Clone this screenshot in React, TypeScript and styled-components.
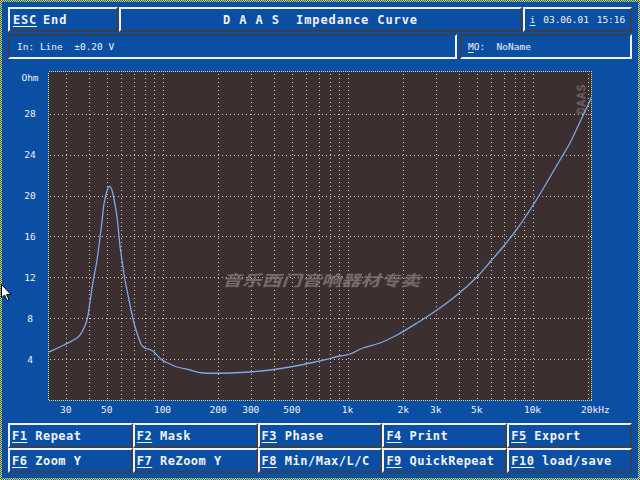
import React, { FC } from 'react';
import styled, { createGlobalStyle } from 'styled-components';

const BLUE = '#0b4fa4';
const LIGHT = '#f2f2f4';
const DARK = '#3a404c';
const MONO = '"DejaVu Sans Mono", "Liberation Mono", monospace';

const GlobalStyle = createGlobalStyle`
  html, body {
    margin: 0;
    padding: 0;
    background: ${BLUE};
  }
`;

const Screen = styled.div`
  position: relative;
  width: 640px;
  height: 480px;
  box-sizing: border-box;
  padding: 2px;
  background: repeating-conic-gradient(#cfd98a 0 25%, #2f6150 0 50%) 0 0 / 2px 2px;
  overflow: hidden;
`;

const Panel = styled.div`
  height: 100%;
  box-sizing: border-box;
  padding: 5px 6px;
  background: ${BLUE};
  color: ${LIGHT};
  font-family: ${MONO};
  display: flex;
  flex-direction: column;
`;

const TopBar = styled.div`
  display: grid;
  grid-template-columns: 110px 1fr 109px;
  gap: 1px;
  height: 25px;
`;

const InfoBar = styled.div`
  display: grid;
  grid-template-columns: 449px 1fr;
  gap: 3px;
  height: 25px;
  margin-top: 2px;
`;

const RaisedBox = styled.div<{ $center?: boolean; $bold?: boolean }>`
  box-sizing: border-box;
  border: 2px solid;
  border-color: ${LIGHT} ${DARK} ${DARK} ${LIGHT};
  display: flex;
  align-items: center;
  justify-content: ${(p) => (p.$center ? 'center' : 'flex-start')};
  white-space: pre;
  font-size: ${(p) => (p.$bold ? '12px' : '9.5px')};
  font-weight: ${(p) => (p.$bold ? 'bold' : 'normal')};
  letter-spacing: ${(p) => (p.$bold ? '0.6px' : '0')};
`;

const EscBox = styled(RaisedBox)`
  padding-left: 3px;
  letter-spacing: 0.8px;
`;

const TitleBox = styled(RaisedBox)`
  letter-spacing: 0.9px;
`;

const DateBox = styled(RaisedBox)`
  word-spacing: 2px;
`;

const InsetBox = styled.div<{ $pad: number }>`
  box-sizing: border-box;
  border: 2px solid;
  border-color: ${DARK} ${LIGHT} ${LIGHT} ${DARK};
  display: flex;
  align-items: center;
  padding-left: ${(p) => p.$pad}px;
  font-size: 9.5px;
  white-space: pre;
`;

const Hot = styled.span`
  text-decoration: underline;
  text-underline-offset: 2px;
  text-decoration-thickness: 1px;
`;

const EndLabel = styled.span`
  margin-left: 6px;
`;

const ChartArea = styled.div`
  height: 364px;
  display: flex;
`;

const KeyGrid = styled.div`
  display: grid;
  grid-template-columns: repeat(5, 1fr);
  grid-template-rows: 25px 25px;
`;

const KeyButton = styled(RaisedBox)`
  padding-left: 2px;
  letter-spacing: 0.5px;
`;

const Cursor = styled.svg`
  position: absolute;
  left: 1px;
  top: 284px;
`;

const fx = (f: number) => 162.5 + 185 * (Math.log10(f) - 2);
const oy = (o: number) => 400 - o * 10.22;

const PLOT = { x: 49, y: 72, w: 542, h: 328 };

const gridFreqs: number[] = [];
[10, 100, 1000].forEach((d) => {
  for (let i = 1; i <= 9; i++) {
    const f = d * i;
    if (f >= 30) gridFreqs.push(f);
  }
});
gridFreqs.push(10000, 20000);

const xLabels: [number, string][] = [
  [30, '30'],
  [50, '50'],
  [100, '100'],
  [200, '200'],
  [300, '300'],
  [500, '500'],
  [1000, '1k'],
  [2000, '2k'],
  [3000, '3k'],
  [5000, '5k'],
  [10000, '10k'],
];

const curvePts: [number, number][] = [
  [48, 352.5], [64, 345], [77, 338], [82, 332], [87, 320], [90, 302],
  [93, 282], [97, 260], [101, 230], [104, 204], [107, 191], [109, 186.5],
  [111, 188], [113, 194], [117, 217], [120, 246], [123, 267], [125, 280],
  [130, 305], [134, 323], [137, 333], [141, 344], [145, 348], [151, 350],
  [155, 353], [162, 360], [170, 364], [177, 367], [190, 370], [203, 373],
  [230, 373], [250, 372], [270, 370], [290, 367], [315, 362], [340, 356],
  [350, 354], [363, 348], [380, 343], [397, 335], [417, 323], [437, 310],
  [457, 295], [477, 277], [490, 262], [503, 247], [517, 229], [530, 210],
  [540, 194], [550, 177], [560, 160], [570, 143], [580, 122], [588, 105],
  [592, 96],
];

const smoothPath = (pts: [number, number][]) => {
  let d = `M${pts[0][0]},${pts[0][1]}`;
  for (let i = 0; i < pts.length - 1; i++) {
    const p0 = pts[i - 1] || pts[i];
    const p1 = pts[i];
    const p2 = pts[i + 1];
    const p3 = pts[i + 2] || p2;
    const c1x = p1[0] + (p2[0] - p0[0]) / 6;
    const c1y = p1[1] + (p2[1] - p0[1]) / 6;
    const c2x = p2[0] - (p3[0] - p1[0]) / 6;
    const c2y = p2[1] - (p3[1] - p1[1]) / 6;
    d += ` C${c1x.toFixed(1)},${c1y.toFixed(1)} ${c2x.toFixed(1)},${c2y.toFixed(1)} ${p2[0]},${p2[1]}`;
  }
  return d;
};

const ImpedanceChart: FC = () => {
  const gridColor = '#d8cab8';
  const labelStyle = { fontFamily: MONO, fontSize: 9.5, fill: LIGHT };
  return (
    <svg width={624} height={364} viewBox="8 59 624 364" shapeRendering="crispEdges">
      <defs>
        <clipPath id="plotClip">
          <rect x={PLOT.x} y={PLOT.y} width={PLOT.w} height={PLOT.h} />
        </clipPath>
      </defs>
      <rect x={PLOT.x} y={PLOT.y} width={PLOT.w} height={PLOT.h} fill="#3c2f2f" />
      {gridFreqs.map((f) => {
        const x = Math.round(fx(f)) + 0.5;
        return (
          <line key={f} x1={x} x2={x} y1={PLOT.y + 2} y2={PLOT.y + PLOT.h}
            stroke={gridColor} strokeDasharray="1 3" />
        );
      })}
      {[4, 8, 12, 16, 20, 24, 28].map((o) => {
        const y = Math.round(oy(o)) + 0.5;
        return (
          <line key={o} x1={PLOT.x + 1} x2={PLOT.x + PLOT.w} y1={y} y2={y}
            stroke={gridColor} strokeDasharray="1 3" />
        );
      })}
      <text x={222} y={286} textLength={198} lengthAdjust="spacingAndGlyphs"
        fontFamily='"Noto Sans CJK SC", sans-serif' fontSize={15} fontWeight="bold"
        fontStyle="italic" fill="#7d7373" opacity={0.9}>
        音乐西门音响器材专卖
      </text>
      <text transform="translate(585 114) rotate(-90)" fontFamily={MONO} fontSize={11}
        fill="none" stroke="#7a6e6e" strokeWidth={0.6} letterSpacing={1}>
        DAAS
      </text>
      <path d={smoothPath(curvePts)} fill="none" stroke="#7ea8e8" strokeWidth={1.3}
        clipPath="url(#plotClip)" shapeRendering="geometricPrecision" />
      <rect x={PLOT.x - 0.5} y={PLOT.y - 0.5} width={PLOT.w + 1} height={PLOT.h + 1}
        fill="none" stroke="#cfd98a" strokeDasharray="1 1" />
      <text x={30} y={80.5} textAnchor="middle" {...labelStyle}>Ohm</text>
      {[4, 8, 12, 16, 20, 24, 28].map((o) => (
        <text key={o} x={30} y={oy(o) + 3.5} textAnchor="middle" {...labelStyle}>
          {o}
        </text>
      ))}
      {xLabels.map(([f, t]) => (
        <text key={f} x={fx(f)} y={413} textAnchor="middle" {...labelStyle}>
          {t}
        </text>
      ))}
      <text x={581} y={413} {...labelStyle}>20kHz</text>
    </svg>
  );
};

const keys: [string, string][] = [
  ['F1', 'Repeat'],
  ['F2', 'Mask'],
  ['F3', 'Phase'],
  ['F4', 'Print'],
  ['F5', 'Export'],
  ['F6', 'Zoom Y'],
  ['F7', 'ReZoom Y'],
  ['F8', 'Min/Max/L/C'],
  ['F9', 'QuickRepeat'],
  ['F10', 'load/save'],
];

export default function App() {
  return (
    <>
      <GlobalStyle />
      <Screen>
        <Panel>
          <TopBar>
            <EscBox $bold>
              <Hot>ESC</Hot>
              <EndLabel>End</EndLabel>
            </EscBox>
            <TitleBox $bold $center>{'D A A S  Impedance Curve'}</TitleBox>
            <DateBox $center>
              <Hot>i</Hot>
              {' 03.06.01 15:16'}
            </DateBox>
          </TopBar>
          <InfoBar>
            <InsetBox $pad={7}>{'In: Line  ±0.20 V'}</InsetBox>
            <InsetBox $pad={6}>
              <Hot>M</Hot>
              {'O:  NoName'}
            </InsetBox>
          </InfoBar>
          <ChartArea>
            <ImpedanceChart />
          </ChartArea>
          <KeyGrid>
            {keys.map(([k, label]) => (
              <KeyButton key={k} $bold>
                <Hot>{k}</Hot>
                {' ' + label}
              </KeyButton>
            ))}
          </KeyGrid>
        </Panel>
        <Cursor width={12} height={18} viewBox="0 0 12 18">
          <path d="M0.5 0.5 L0.5 14 L3.5 11 L6 16.5 L8 15.5 L5.5 10.5 L10 10.5 Z"
            fill="#fff" stroke="#000" strokeWidth={1} />
        </Cursor>
      </Screen>
    </>
  );
}
